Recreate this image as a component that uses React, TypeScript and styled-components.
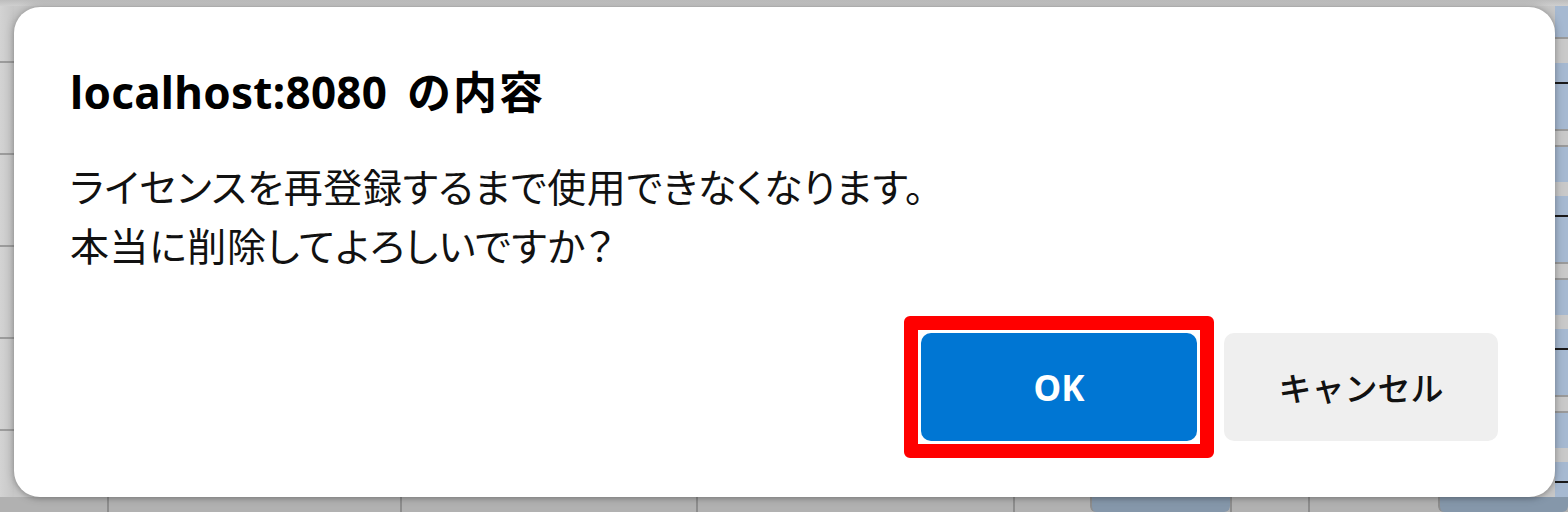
import React from "react";
import styled, { createGlobalStyle } from "styled-components";

const Global = createGlobalStyle`
  html, body { margin: 0; padding: 0; }
  body {
    width: 1568px;
    height: 512px;
    overflow: hidden;
    font-family: "Noto Sans", "Noto Sans CJK JP", sans-serif;
  }
`;

const Page = styled.div`
  position: relative;
  width: 1568px;
  height: 512px;
  overflow: hidden;
  background: #cbcbcb;
`;

const Underlay = styled.div`
  display: grid;
  grid-template-columns: 14px 1fr 13px;
  grid-template-rows: 6px 1fr 15px;
  width: 100%;
  height: 100%;
`;

const TopStrip = styled.div`
  grid-column: 1 / 4;
  background: linear-gradient(#bdbdbd, #cfcfcf);
`;

const LeftStrip = styled.div`
  background:
    repeating-linear-gradient(
      to bottom,
      transparent 0px,
      transparent 55px,
      #9c9c9c 55px,
      #9c9c9c 57px,
      transparent 57px,
      transparent 92px
    ),
    linear-gradient(to right, #d3d3d3, #c6c6c6);
`;

const Middle = styled.div`
  background: #c8c8c8;
`;

const RightStrip = styled.div`
  background:
    repeating-linear-gradient(
      to bottom,
      #c9c9c9 0px,
      #c9c9c9 14px,
      #a6b9d1 14px,
      #a6b9d1 33px,
      #1a1a1a 33px,
      #1a1a1a 35px,
      #a6b9d1 35px,
      #a6b9d1 80px,
      #9a9a9a 80px,
      #9a9a9a 82px,
      #c9c9c9 82px,
      #c9c9c9 96px,
      #9a9a9a 96px,
      #9a9a9a 98px,
      #a6b9d1 98px,
      #a6b9d1 133px
    );
  background-position: 0 43px;
`;

const BottomStrip = styled.div`
  grid-column: 1 / 4;
  display: grid;
  grid-template-columns: 107px 293px 296px 317px 77px 140px 78px 130px 130px;
  background: #b1b1b1;
`;

const BottomCell = styled.div<{ $tab?: boolean }>`
  border-left: 2px solid #8d8d8d;
  background: ${(p) => (p.$tab ? "#8597aa" : "transparent")};
  border-radius: ${(p) => (p.$tab ? "0 0 6px 6px" : "0")};
  &:first-child { border-left: none; }
`;

const Overlay = styled.div`
  position: absolute;
  inset: 0;
  display: flex;
  padding: 7px 13px 15px 14px;
`;

const Dialog = styled.div`
  flex: 1;
  display: flex;
  flex-direction: column;
  background: #ffffff;
  border-radius: 26px;
  box-shadow: 0 0 10px rgba(0, 0, 0, 0.28), 0 2px 4px rgba(0, 0, 0, 0.12);
  padding: 57px 57px 39px 56px;
`;

const Title = styled.h1`
  margin: 0;
  font-size: 44px;
  line-height: 56px;
  font-weight: 700;
  color: #000;
  letter-spacing: 0.3px;
  word-spacing: 8px;
`;

const TitleCjk = styled.span`
  letter-spacing: 2px;
`;

const Message = styled.p`
  margin: 36px 0 0 0;
  font-family: "Noto Sans CJK JP", sans-serif;
  font-feature-settings: "palt";
  font-size: 39px;
  line-height: 59px;
  font-weight: 400;
  color: #111;
  letter-spacing: 0.6px;
`;

const Actions = styled.div`
  margin-top: auto;
  display: flex;
  justify-content: flex-end;
  align-items: center;
  gap: 10px;
`;

const Highlight = styled.span`
  display: inline-flex;
  border: 14px solid #ff0000;
  border-radius: 6px;
  padding: 3px;
  background: #fff;
  margin-left: -16px;
`;

const Button = styled.button<{ $primary?: boolean }>`
  width: ${(p) => (p.$primary ? "276px" : "274px")};
  height: 108px;
  border: none;
  border-radius: 10px;
  background: ${(p) => (p.$primary ? "#0076d3" : "#efefef")};
  color: ${(p) => (p.$primary ? "#ffffff" : "#111111")};
  font-family: "Noto Sans", "Noto Sans CJK JP", sans-serif;
  font-size: ${(p) => (p.$primary ? "35px" : "33px")};
  font-weight: ${(p) => (p.$primary ? 700 : 500)};
  padding: 0;
  cursor: pointer;
`;

export default function App() {
  return (
    <Page>
      <Global />
      <Underlay>
        <TopStrip />
        <LeftStrip />
        <Middle />
        <RightStrip />
        <BottomStrip>
          <BottomCell />
          <BottomCell />
          <BottomCell />
          <BottomCell />
          <BottomCell />
          <BottomCell $tab />
          <BottomCell />
          <BottomCell />
          <BottomCell $tab />
        </BottomStrip>
      </Underlay>
      <Overlay>
        <Dialog role="dialog">
          <Title>
            localhost:8080 <TitleCjk>の内容</TitleCjk>
          </Title>
          <Message>
            ライセンスを再登録するまで使用できなくなります。
            <br />
            本当に削除してよろしいですか？
          </Message>
          <Actions>
            <Highlight>
              <Button $primary>OK</Button>
            </Highlight>
            <Button>キャンセル</Button>
          </Actions>
        </Dialog>
      </Overlay>
    </Page>
  );
}
